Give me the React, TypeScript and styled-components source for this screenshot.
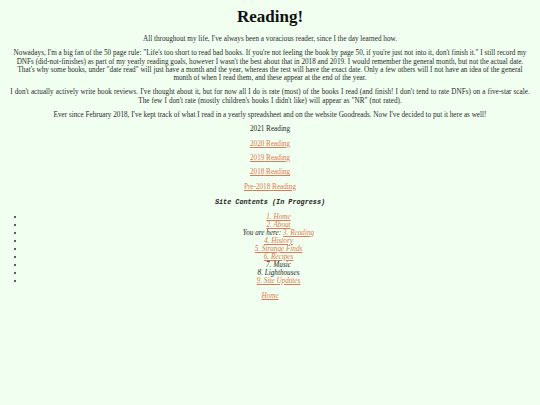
import React from 'react';
import styled, { createGlobalStyle } from 'styled-components';

const GlobalStyle = createGlobalStyle`
  html, body {
    margin: 0;
    background: #f0fff0;
  }
  body {
    padding: 8px;
    font-family: "Liberation Serif", serif;
    font-size: 7.2px;
    line-height: 8.3px;
    color: #2a2a2a;
  }
`;

const Page = styled.main`
  display: flex;
  flex-direction: column;
  align-items: stretch;
  text-align: center;
`;

const Title = styled.h1`
  font-size: 17px;
  line-height: 18px;
  font-weight: bold;
  margin: 0 0 9px;
  color: #111;
`;

const Para = styled.p<{ $loose?: boolean }>`
  margin: 0 0 6px;
  word-spacing: ${(p) => (p.$loose ? '0.3px' : '0')};
`;

const YearLink = styled.a`
  color: #e07a52;
  text-decoration: underline;
`;

const SiteHeading = styled.h4`
  font-family: "Liberation Mono", monospace;
  font-style: italic;
  font-weight: bold;
  font-size: 6.8px;
  line-height: 8px;
  margin: 1px 0 7px;
  color: #222;
`;

const Contents = styled.ul`
  margin: 0 0 7px;
  padding-left: 17px;
  list-style: disc;
`;

const Item = styled.li`
  font-style: italic;
  line-height: 8px;
`;

const years = ['2020', '2019', '2018', 'Pre-2018'];

const items: { label: string; link?: boolean; here?: boolean }[] = [
  { label: '1. Home', link: true },
  { label: '2. About', link: true },
  { label: '3. Reading', here: true },
  { label: '4. History', link: true },
  { label: '5. Strange Finds', link: true },
  { label: '6. Recipes', link: true },
  { label: '7. Music' },
  { label: '8. Lighthouses' },
  { label: '9. Site Updates', link: true },
];

export default function App() {
  return (
    <>
      <GlobalStyle />
      <Page>
        <Title>Reading!</Title>
        <Para>All throughout my life, I've always been a voracious reader, since I the day learned how.</Para>
        <Para>
          Nowadays, I'm a big fan of the 50 page rule: "Life's too short to read bad books. If you're not feeling the book by page 50, if you're just not into it, don't finish it." I still record my DNFs (did-not-finishes) as part of my yearly reading goals, however I wasn't the best about that in 2018 and 2019. I would remember the general month, but not the actual date. That's why some books, under "date read" will just have a month and the year, whereas the rest will have the exact date. Only a few others will I not have an idea of the general month of when I read them, and these appear at the end of the year.
        </Para>
        <Para $loose>
          I don't actually actively write book reviews. I've thought about it, but for now all I do is rate (most) of the books I read (and finish! I don't tend to rate DNFs) on a five-star scale. The few I don't rate (mostly children's books I didn't like) will appear as "NR" (not rated).
        </Para>
        <Para>Ever since February 2018, I've kept track of what I read in a yearly spreadsheet and on the website Goodreads. Now I've decided to put it here as well!</Para>
        <Para>2021 Reading</Para>
        {years.map((y) => (
          <Para key={y}>
            <YearLink href="#">{y} Reading</YearLink>
          </Para>
        ))}
        <SiteHeading>Site Contents (In Progress)</SiteHeading>
        <Contents>
          {items.map((it) => (
            <Item key={it.label}>
              {it.here ? (
                <>
                  You are here: <YearLink href="#">{it.label}</YearLink>
                </>
              ) : it.link ? (
                <YearLink href="#">{it.label}</YearLink>
              ) : (
                it.label
              )}
            </Item>
          ))}
        </Contents>
        <Para>
          <YearLink href="#">
            <i>Home</i>
          </YearLink>
        </Para>
      </Page>
    </>
  );
}
